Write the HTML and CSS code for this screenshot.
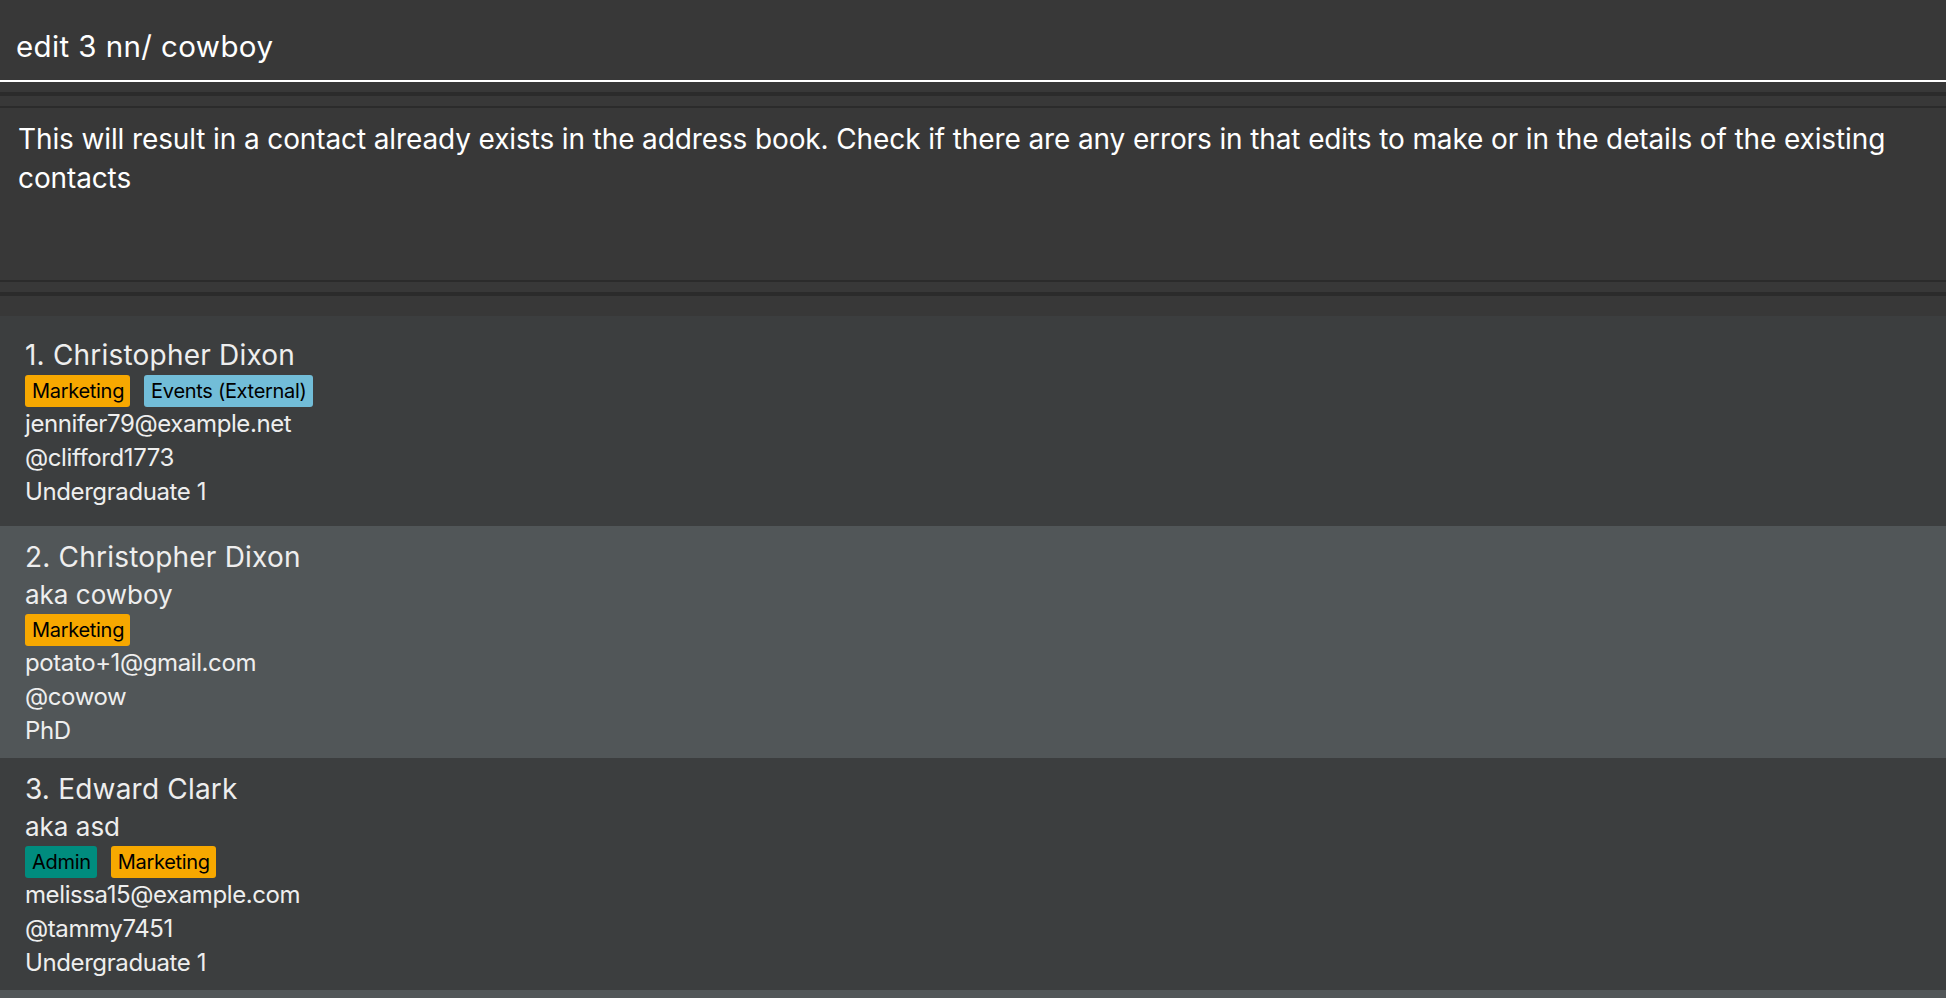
FILE: index.html
```html
<!DOCTYPE html>
<html lang="en">
<head>
<meta charset="utf-8">
<title>Address Book</title>
<link rel="stylesheet" href="styles.css">
</head>
<body>
<div class="app">
  <div class="command-box">
    <div class="command-text">edit 3 nn/ cowboy</div>
  </div>
  <div class="divider"></div>
  <div class="result-display">
    <p class="result-text">This will result in a contact already exists in the address book. Check if there are any errors in that edits to make or in the details of the existing contacts</p>
  </div>
  <div class="divider divider-last"></div>
  <div class="person-list">
    <div class="card card-even card-short">
      <div class="card-name">1. Christopher Dixon</div>
      <div class="tags">
        <span class="tag tag-marketing">Marketing</span>
        <span class="tag tag-events">Events (External)</span>
      </div>
      <div class="card-detail">jennifer79@example.net</div>
      <div class="card-detail">@clifford1773</div>
      <div class="card-detail">Undergraduate 1</div>
    </div>
    <div class="card card-odd">
      <div class="card-name">2. Christopher Dixon</div>
      <div class="card-nick">aka cowboy</div>
      <div class="tags">
        <span class="tag tag-marketing">Marketing</span>
      </div>
      <div class="card-detail">potato+1@gmail.com</div>
      <div class="card-detail">@cowow</div>
      <div class="card-detail">PhD</div>
    </div>
    <div class="card card-even">
      <div class="card-name">3. Edward Clark</div>
      <div class="card-nick">aka asd</div>
      <div class="tags">
        <span class="tag tag-admin">Admin</span>
        <span class="tag tag-marketing">Marketing</span>
      </div>
      <div class="card-detail">melissa15@example.com</div>
      <div class="card-detail">@tammy7451</div>
      <div class="card-detail">Undergraduate 1</div>
    </div>
    <div class="card-rest"></div>
  </div>
</div>
</body>
</html>
```
FILE: styles.css
```css
html, body {
  margin: 0;
  padding: 0;
  height: 100%;
  overflow: hidden;
}
body {
  background: #383838;
  font-family: Inter, "Noto Sans", "Liberation Sans", sans-serif;
  color: #ffffff;
}
.app {
  display: flex;
  flex-direction: column;
}
.command-box {
  height: 82px;
  box-sizing: border-box;
  padding: 12px 16px 0;
  border-bottom: 2px solid #ffffff;
}
.command-text {
  font-size: 29.5px;
  line-height: 68px;
  letter-spacing: 0.4px;
  color: #ffffff;
}
.divider {
  box-sizing: border-box;
  height: 24px;
  padding: 10px 0;
}
.divider::before {
  content: "";
  display: block;
  height: 4px;
  background: #2b2b2b;
}
.divider-last {
  height: 34px;
  padding-bottom: 20px;
}
.result-display {
  height: 176px;
  box-sizing: border-box;
  border-top: 2px solid #2b2b2b;
  border-bottom: 2px solid #2b2b2b;
  padding: 12px 18px 0;
}
.result-text {
  margin: 0;
  font-size: 28px;
  line-height: 39px;
  letter-spacing: -0.12px;
  color: #ffffff;
}
.person-list {
  display: flex;
  flex-direction: column;
}
.card {
  display: flex;
  flex-direction: column;
  justify-content: center;
  padding: 11px 25px 10px;
  color: #eeeeee;
}
.card-short {
  min-height: 210px;
  box-sizing: border-box;
}
.card-even {
  background: #3c3e3f;
}
.card-odd {
  background: #515658;
}
.card-name {
  font-size: 28px;
  line-height: 40px;
  letter-spacing: 0.2px;
}
.card-nick {
  font-size: 26px;
  line-height: 36px;
}
.card-nick + .tags {
  margin-top: 1px;
}
.tags {
  display: flex;
  gap: 14px;
  height: 32px;
}
.tag {
  display: block;
  height: 32px;
  box-sizing: border-box;
  padding: 0 6px 0 7px;
  border-radius: 3px;
  font-size: 20px;
  line-height: 32px;
  letter-spacing: -0.3px;
  color: #000000;
}
.tag-marketing {
  background: #f7a800;
}
.tag-events {
  background: #72bdd8;
}
.tag-admin {
  background: #008c7e;
}
.card-detail {
  font-size: 24px;
  line-height: 34px;
  letter-spacing: -0.4px;
}
.card-rest {
  height: 20px;
  background: #515658;
}
```
